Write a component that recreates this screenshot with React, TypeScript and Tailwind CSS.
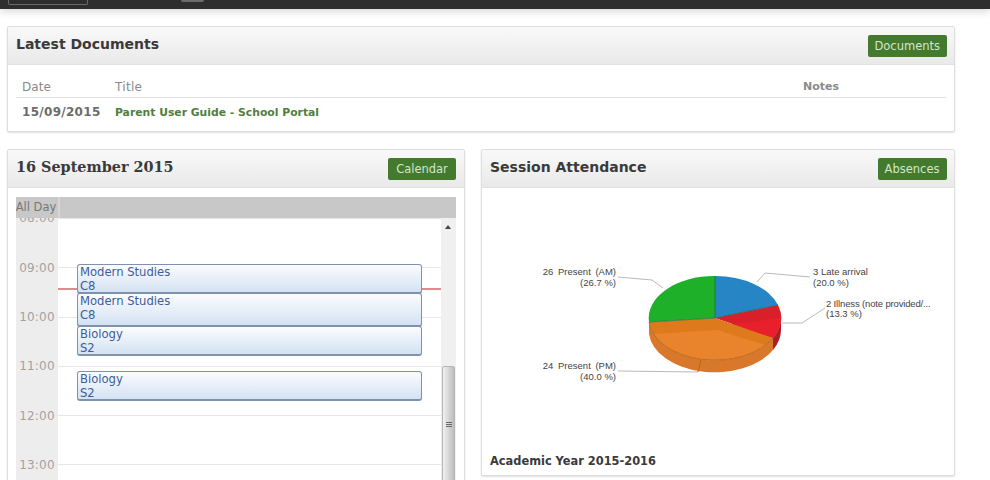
const hours = ['08:00', '09:00', '10:00', '11:00', '12:00', '13:00'];

function GreenButton({ label, className }: { label: string; className?: string }) {
  return (
    <button
      className={`h-[22px] rounded-[2px] bg-[#437a2e] px-[6.5px] text-center text-[11.5px] leading-[23px] text-[#d3e6ca] ${className ?? ''}`}
    >
      {label}
    </button>
  );
}

function PanelHeader({
  title,
  action,
  serif,
  buttonClass,
}: {
  title: string;
  action: string;
  serif?: boolean;
  buttonClass?: string;
}) {
  return (
    <div className="flex h-[38px] shrink-0 items-center justify-between border-b border-[#e2e2e2] bg-gradient-to-b from-[#f9f9f9] to-[#e9e9e9] pl-[8px] pr-[7.5px]">
      <h2
        className={`font-bold text-[#3a3a3a] ${serif ? "mb-[4px] font-['DejaVu_Serif',serif] text-[14.4px]" : 'mb-[2px] text-[14px]'}`}
      >
        {title}
      </h2>
      <GreenButton label={action} className={buttonClass} />
    </div>
  );
}

function CalendarEvent({ title, room, className }: { title: string; room: string; className: string }) {
  return (
    <div
      className={`absolute left-[61px] w-[345px] rounded-[3px] border border-b-2 border-[#7e92ae] bg-gradient-to-b from-[#fbfcfe] to-[#d4e2f3] pl-[2px] text-[11.6px] leading-[14px] text-[#3d5c9c] ${className}`}
    >
      <div>{title}</div>
      <div>{room}</div>
    </div>
  );
}

function PieChart() {
  return (
    <svg viewBox="482 188 472 262" className="block h-[262px] w-[472px] font-['Liberation_Sans',sans-serif]">
      {/* leader lines */}
      <g fill="none" stroke="#b9b9b9" strokeWidth="1">
        <polyline points="618,277 652,280 663,288" />
        <polyline points="757,282 765,273 810,277" />
        <polyline points="782,323 802,323 825,308" />
        <polyline points="618,371 698,372" />
      </g>
      {/* sides */}
      <path d="M649 322 L649 334 A66 42 0 0 0 773 350 L773 338 A66 42 0 0 1 649 322 Z" fill="#d9782a" />
      <path d="M773 338 L773 350 A66 42 0 0 0 781 330 L781 318 A66 42 0 0 1 773 338 Z" fill="#a81f28" />
      <path d="M701 360 L698 372" stroke="#b8651c" strokeWidth="1" />
      {/* top */}
      <path d="M715 318 L715 276 A66 42 0 0 1 778 305 Z" fill="#2585c5" />
      <path d="M715 318 L778 305 A66 42 0 0 1 773 338 Z" fill="#d81f2a" />
      <path d="M727 325 L781 318 A66 42 0 0 1 773 338 Z" fill="#ea1f2c" />
      <path d="M715 318 L773 338 A66 42 0 0 1 649 322 Z" fill="#dd7a1c" />
      <path d="M654 334 L717 330 L765 345 A66 42 0 0 1 654 334 Z" fill="#e9842c" />
      <path d="M715 318 L649 322 A66 42 0 0 1 715 276 Z" fill="#1fb02a" />
      <path d="M773 338 A66 42 0 0 1 649 322" fill="none" stroke="#9a5a14" strokeWidth="0.6" />
      <path d="M715 318 L649 322 M715 318 L715 276 M715 318 L778 305" stroke="#2a5a3a" strokeWidth="0.6" />
      {/* labels */}
      <g fontSize="9.5" fill="#444" textAnchor="end">
        <text x="616" y="275" wordSpacing="2">26 Present (AM)</text>
        <text x="616" y="286">(26.7 %)</text>
        <text x="616" y="369" wordSpacing="2">24 Present (PM)</text>
        <text x="616" y="380">(40.0 %)</text>
      </g>
      <g fontSize="9.5" fill="#444">
        <text x="813" y="275">3 Late arrival</text>
        <text x="813" y="286">(20.0 %)</text>
        <text x="826" y="307" letterSpacing="-0.15">2 Illness (note provided/...</text>
        <text x="826" y="317">(13.3 %)</text>
      </g>
    </svg>
  );
}

export default function App() {
  return (
    <div className="h-[480px] w-[990px] overflow-hidden bg-white font-['DejaVu_Sans',sans-serif]">
      {/* top bar */}
      <header className="flex h-[9px] items-start bg-[#2e2e2e] shadow-[0_2px_8px_rgba(0,0,0,0.18)]">
        <div className="ml-[8px] h-[5px] w-[80px] rounded-b-[2px] border-x border-b border-[#6a6a6a]" />
        <div className="ml-[93px] h-[2px] w-[23px] rounded-b-[2px] bg-[#6b6b6b]" />
      </header>

      <main className="flex w-[955px] flex-col gap-[17px] pl-[7px] pt-[17px]">
        {/* documents */}
        <section className="rounded-[2px] border border-[#dedede] bg-white shadow-[0_1px_2px_rgba(0,0,0,0.12)]">
          <PanelHeader title="Latest Documents" action="Documents" />
          <div className="px-[8px] pb-[8px] pt-[12px] text-[12px]">
            <div className="flex h-[21px] items-center border-b border-[#e3e3e3] pl-[6px] font-bold text-[#8a8a8a]">
              <span className="w-[93px] font-normal tracking-[0.1px]">Date</span>
              <span className="w-[688px] font-normal tracking-[0.3px]">Title</span>
              <span className="text-[11px]">Notes</span>
            </div>
            <div className="flex h-[25px] items-baseline pl-[6px] pt-[5px] font-bold">
              <span className="w-[93px] tracking-[0.3px] text-[#6c6c6c]">15/09/2015</span>
              <span className="text-[10.8px] text-[#4f7f3d]">Parent User Guide - School Portal</span>
            </div>
          </div>
        </section>

        <div className="flex gap-[16px]">
          {/* calendar */}
          <section className="flex h-[400px] w-[458px] flex-col rounded-[2px] border border-[#dedede] bg-white shadow-[0_1px_2px_rgba(0,0,0,0.12)]">
            <PanelHeader title="16 September 2015" action="Calendar" serif buttonClass="mr-[0.5px] w-[68px]" />
            <div className="relative mx-[8px] mt-[9px] overflow-hidden text-[12px]">
              <div className="relative z-10 flex h-[21px] bg-[#c8c8c8] text-[#777]">
                <span className="flex w-[44px] items-center justify-center whitespace-nowrap border-r-2 border-[#d6d6d6] pr-[2px] text-[11.5px]">
                  All Day
                </span>
              </div>
              <div className="relative flex h-[300px] overflow-hidden">
                <div className="mt-[-24.2px] flex-1">
                  {hours.map((h) => (
                    <div key={h} className="flex h-[49.3px] items-center">
                      <span className="flex h-full w-[42px] items-center justify-center bg-[#ededed] tracking-[0.2px] text-[#a2a2a2]">
                        {h}
                      </span>
                      <span className="h-px flex-1 bg-[#e6e6e6]" />
                    </div>
                  ))}
                  <div className="h-[20px] w-[42px] bg-[#ededed]" />
                </div>
                {/* scrollbar */}
                <div className="flex w-[15px] flex-col bg-[#f0f0f0]">
                  <div className="ml-[4px] mt-[7px] h-0 w-0 border-x-[3.5px] border-b-[4px] border-x-transparent border-b-[#444]" />
                  <div className="ml-[1px] mt-[137px] flex h-[120px] w-[13px] flex-col items-center gap-[1px] rounded-t-[2px] border border-[#b5b5b5] bg-gradient-to-r from-[#f1f1f1] to-[#bdbdbe] pt-[55px]">
                    <span className="h-px w-[6px] bg-[#666]" />
                    <span className="h-px w-[6px] bg-[#666]" />
                    <span className="h-px w-[6px] bg-[#666]" />
                  </div>
                </div>
                {/* current time */}
                <div className="absolute left-[42px] top-[70px] h-[2px] w-[383px] bg-[#dc8a8a]" />
                <CalendarEvent title="Modern Studies" room="C8" className="top-[46px] h-[30px]" />
                <CalendarEvent title="Modern Studies" room="C8" className="top-[75px] h-[34px]" />
                <CalendarEvent title="Biology" room="S2" className="top-[108px] h-[30px]" />
                <CalendarEvent title="Biology" room="S2" className="top-[153px] h-[30px]" />
              </div>
            </div>
          </section>

          {/* attendance */}
          <section className="flex h-[327px] w-[474px] flex-col rounded-[2px] border border-[#dedede] bg-white shadow-[0_1px_2px_rgba(0,0,0,0.12)]">
            <PanelHeader title="Session Attendance" action="Absences" buttonClass="w-[69px]" />
            <PieChart />
            <p className="pl-[8px] pt-[3px] text-[11.4px] font-bold text-[#3a3a3a]">Academic Year 2015-2016</p>
          </section>
        </div>
      </main>
    </div>
  );
}
